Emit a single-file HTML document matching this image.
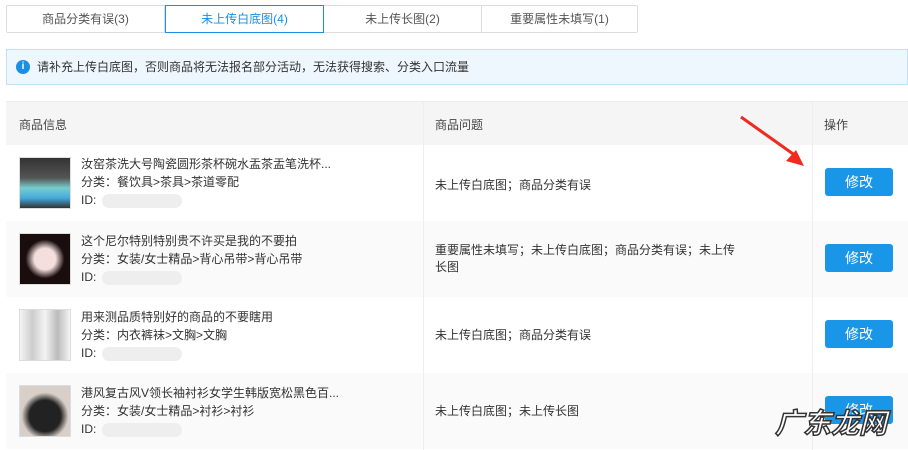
<!DOCTYPE html>
<html><head><meta charset="utf-8"><style>
*{margin:0;padding:0;box-sizing:border-box}
body{width:908px;height:450px;background:#fff;font-family:"Liberation Sans","Noto Sans CJK SC",sans-serif;font-size:12px;color:#333;position:relative;overflow:hidden}
.tabs{position:absolute;left:6px;top:5px;height:28px;width:632px;border:1px solid #ddd;border-radius:2px;display:flex}
.tab{flex:0 0 auto;text-align:center;line-height:26px;color:#555;border-right:1px solid #ddd}
.tab.a{color:#1a8fe3;border:1px solid #1a8fe3;margin:-1px 0;line-height:26px;height:28px}
.note{position:absolute;left:6px;top:49px;width:902px;height:36px;background:#eef7fd;border:1px solid #bfe2f8;line-height:34px;padding-left:30px;color:#333}
.note i{position:absolute;left:9px;top:10px;width:14px;height:14px;border-radius:50%;background:#1a8fe3;color:#fff;font-style:normal;font-weight:bold;font-size:10px;line-height:14px;text-align:center}
.tbl{position:absolute;left:6px;top:101px;width:902px;border-top:1px solid #eee}
.row{position:relative;height:76px}
.row.h{height:43px;background:#f5f5f5;color:#444}
.row.g{background:#fafafa}
.vl{position:absolute;top:101px;width:1px;height:349px;background:#eee}
.c{position:absolute}
.btn{position:absolute;left:819px;width:68px;height:28px;background:#1a96e8;color:#fff;border-radius:3px;text-align:center;line-height:28px;font-size:14px}
.img{position:absolute;left:13px;top:12px;width:52px;height:52px;border:1px solid #ddd}
.t{position:absolute;left:75px;line-height:18px}
.blur{display:inline-block;width:80px;height:14px;background:#eee;border-radius:7px;vertical-align:middle;margin-left:6px}
</style></head><body>
<div class="tabs">
<div class="tab" style="width:158px">商品分类有误(3)</div>
<div class="tab a" style="width:159px">未上传白底图(4)</div>
<div class="tab" style="width:158px">未上传长图(2)</div>
<div class="tab" style="width:155px;border-right:none">重要属性未填写(1)</div>
</div>
<div class="note"><i>i</i>请补充上传白底图，否则商品将无法报名部分活动，无法获得搜索、分类入口流量</div>
<div class="tbl">
<div class="row h"><span class="c" style="left:13px;top:14px">商品信息</span><span class="c" style="left:429px;top:14px">商品问题</span><span class="c" style="left:818px;top:14px">操作</span></div>
<div class="row"><div class="img" style="background:linear-gradient(#333,#555 40%,#7cc 60%,#4ad 80%,#333)"></div><div class="t" style="top:10px">汝窑茶洗大号陶瓷圆形茶杯碗水盂茶盂笔洗杯...<br>分类：餐饮具&gt;茶具&gt;茶道零配<br>ID:<span class="blur"></span></div><span class="c" style="left:429px;top:31px">未上传白底图；商品分类有误</span><div class="btn" style="top:23px">修改</div></div>
<div class="row g"><div class="img" style="background:radial-gradient(circle at 50% 50%,#f5dede 30%,#1a0d0d 55%)"></div><div class="t" style="top:11px">这个尼尔特别特别贵不许买是我的不要拍<br>分类：女装/女士精品&gt;背心吊带&gt;背心吊带<br>ID:<span class="blur"></span></div><span class="c" style="left:429px;top:21px;width:310px;line-height:17px">重要属性未填写；未上传白底图；商品分类有误；未上传长图</span><div class="btn" style="top:23px">修改</div></div>
<div class="row"><div class="img" style="background:linear-gradient(90deg,#f4f4f4,#ccc,#f4f4f4,#bbb,#f4f4f4)"></div><div class="t" style="top:11px">用来测品质特别好的商品的不要瞎用<br>分类：内衣裤袜&gt;文胸&gt;文胸<br>ID:<span class="blur"></span></div><span class="c" style="left:429px;top:29px">未上传白底图；商品分类有误</span><div class="btn" style="top:23px">修改</div></div>
<div class="row g"><div class="img" style="background:radial-gradient(circle at 50% 60%,#222 40%,#d8d0c8 60%)"></div><div class="t" style="top:11px">港风复古风V领长袖衬衫女学生韩版宽松黑色百...<br>分类：女装/女士精品&gt;衬衫&gt;衬衫<br>ID:<span class="blur"></span></div><span class="c" style="left:429px;top:29px">未上传白底图；未上传长图</span><div class="btn" style="top:23px">修改</div></div>
</div>
<div class="vl" style="left:423px"></div><div class="vl" style="left:812px"></div>
<svg style="position:absolute;left:738px;top:114px" width="70" height="55"><path d="M3 3 L58 42" stroke="#f02a1e" stroke-width="3"/><path d="M66 52 L48 47 L58 36 Z" fill="#f02a1e"/></svg>
<div style="position:absolute;left:775px;top:402px;font-size:28px;font-weight:bold;color:#fff;-webkit-text-stroke:1.5px #333;font-style:italic">广东龙网</div>
</body></html>
